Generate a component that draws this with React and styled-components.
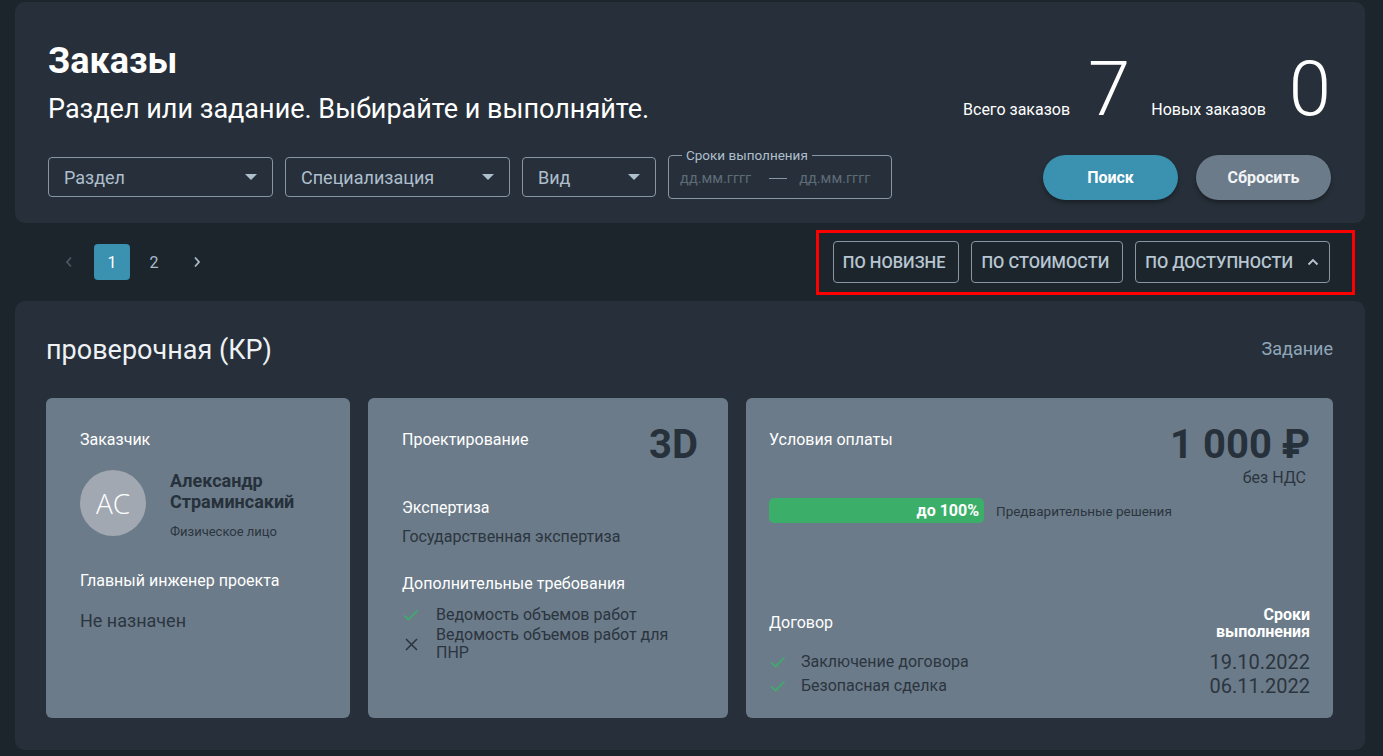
import React from "react";
import styled, { createGlobalStyle } from "styled-components";

const Global = createGlobalStyle`
  html, body { margin: 0; padding: 0; }
  body {
    background: #1d252c;
    font-family: Roboto, "Noto Sans", sans-serif;
    color: #ffffff;
  }
  * { box-sizing: border-box; }
`;

const Page = styled.div`
  padding: 2px 18px 6px 15px;
  display: flex;
  flex-direction: column;
`;

const Panel = styled.section`
  background: #27303a;
  border-radius: 10px;
`;

const Header = styled(Panel)`
  display: flex;
  justify-content: space-between;
  padding: 35px 34px 23px 33px;
  height: 221px;
`;

const HeadLeft = styled.div`
  display: flex;
  flex-direction: column;
`;

const Title = styled.h1`
  margin: 0;
  font-size: 36px;
  line-height: 48px;
  font-weight: 700;
  color: #ffffff;
`;

const Subtitle = styled.p`
  margin: 7px 0 0;
  font-size: 27px;
  line-height: 34px;
  color: #ffffff;
`;

const Filters = styled.div`
  display: flex;
  align-items: flex-end;
  gap: 12px;
  margin-top: 22px;
`;

const Select = styled.div`
  width: ${(p) => p.$w}px;
  height: 40px;
  border: 1px solid #8796a3;
  border-radius: 4px;
  display: flex;
  align-items: center;
  justify-content: space-between;
  padding: 0 15px 0 15px;
  font-size: 18px;
  color: #aebfcd;
  margin-bottom: 2px;
`;

const Caret = styled.span`
  width: 0;
  height: 0;
  border-left: 6px solid transparent;
  border-right: 6px solid transparent;
  border-top: 6px solid #aebfcd;
`;

const DateField = styled.fieldset`
  margin: 0;
  min-width: 0;
  width: 224px;
  height: 51px;
  border: 1px solid #8796a3;
  border-radius: 4px;
  padding: 0 11px 4px;
  display: flex;
  align-items: center;
`;

const Legend = styled.legend`
  font-size: 13.5px;
  color: #aebfcd;
  padding: 0 4px;
  margin-left: 2px;
  line-height: 14px;
`;

const DatePh = styled.span`
  font-size: 14.5px;
  color: #5d6b77;
`;

const DateDash = styled.span`
  width: 18px;
  height: 1px;
  background: #8796a3;
  margin: 0 12px 0 18px;
`;

const HeadRight = styled.div`
  display: flex;
  flex-direction: column;
  align-items: flex-end;
  justify-content: space-between;
  padding-top: 22px;
`;

const Stats = styled.div`
  display: flex;
  align-items: baseline;
`;

const StatLabel = styled.span`
  font-size: 16px;
  color: #ffffff;
  margin-right: ${(p) => p.$mr}px;
`;

const StatValue = styled.span`
  font-size: 76px;
  font-weight: 300;
  line-height: 60px;
  color: #ffffff;
  margin-right: ${(p) => p.$mr || 0}px;
`;

const Buttons = styled.div`
  display: flex;
  gap: 18px;
`;

const PillButton = styled.button`
  width: 135px;
  height: 45px;
  border: none;
  border-radius: 23px;
  background: ${(p) => (p.$primary ? "#3b91b0" : "#6c7b89")};
  font-family: inherit;
  font-size: 16px;
  font-weight: 700;
  box-shadow: 0 3px 4px rgba(0, 0, 0, 0.35);
  cursor: pointer;
  color: ${(p) => (p.$primary ? "#ffffff" : "#f1f4f6")};
`;

const SortRow = styled.div`
  display: flex;
  justify-content: space-between;
  align-items: center;
  height: 78px;
  padding: 0 10px 0 32px;
`;

const Pager = styled.div`
  display: flex;
  align-items: center;
`;

const PageArrow = styled.span`
  width: 44px;
  display: flex;
  justify-content: center;
  color: ${(p) => (p.$disabled ? "#4a5661" : "#a9bccb")};
`;

const PageNum = styled.span`
  width: 36px;
  height: 36px;
  margin: 0 3px;
  border-radius: 4px;
  display: flex;
  align-items: center;
  justify-content: center;
  font-size: 16px;
  background: ${(p) => (p.$active ? "#3b91b0" : "transparent")};
  color: ${(p) => (p.$active ? "#ffffff" : "#a9bccb")};
`;

const SortFrame = styled.div`
  border: 3px solid #ff0000;
  display: flex;
  gap: 12px;
  padding: 8px 22px 9px 14px;
  margin-top: 1px;
`;

const SortButton = styled.button`
  height: 42px;
  padding: 0 13px 0 9px;
  border: 1px solid #8796a3;
  border-radius: 4px;
  background: transparent;
  font-family: inherit;
  font-size: 16.4px;
  font-weight: 500;
  color: #b7c6d2;
  text-transform: uppercase;
  display: flex;
  align-items: center;
  gap: 14px;
  padding-right: ${(p) => (p.$icon ? 10 : 13)}px;
`;

const Orders = styled(Panel)`
  padding: 33px 32px 32px 31px;
  display: flex;
  flex-direction: column;
`;

const OrderHead = styled.div`
  display: flex;
  justify-content: space-between;
  align-items: center;
  margin-bottom: 32px;
`;

const OrderTitle = styled.h2`
  margin: 0;
  font-size: 27px;
  font-weight: 400;
  line-height: 32px;
  color: #eef2f5;
`;

const OrderKind = styled.span`
  font-size: 18px;
  color: #8fa6b9;
  margin-top: -4px;
`;

const Cards = styled.div`
  display: grid;
  grid-template-columns: 304px 360px 1fr;
  gap: 18px;
`;

const Card = styled.div`
  background: #6b7b89;
  border-radius: 6px;
  height: 320px;
  padding: 32px ${(p) => p.$pr || 32}px 20px ${(p) => p.$pl || 34}px;
  display: flex;
  flex-direction: column;
`;

const Label = styled.div`
  font-size: 16px;
  line-height: 20px;
  color: #ffffff;
  margin-top: ${(p) => p.$mt || 0}px;
`;

const DarkText = styled.div`
  font-size: ${(p) => p.$size || 16}px;
  line-height: ${(p) => p.$lh || 20}px;
  color: #2b3540;
  margin-top: ${(p) => p.$mt || 0}px;
`;

const Person = styled.div`
  display: flex;
  align-items: center;
  gap: 24px;
  margin-top: 16px;
`;

const Avatar = styled.div`
  width: 66px;
  height: 66px;
  border-radius: 50%;
  background: #a1a8b1;
  display: flex;
  align-items: center;
  justify-content: center;
  font-size: 28px;
  font-weight: 300;
  color: #ffffff;
  font-family: "Open Sans", Roboto, sans-serif;
  flex: none;
`;

const PersonInfo = styled.div`
  display: flex;
  flex-direction: column;
  padding-top: 4px;
`;

const PersonName = styled.div`
  font-size: 18px;
  line-height: 21px;
  font-weight: 700;
  color: #27313b;
`;

const PersonType = styled.div`
  font-size: 13px;
  color: #2b3540;
  margin-top: 12px;
`;

const RowBetween = styled.div`
  display: flex;
  justify-content: space-between;
  align-items: ${(p) => p.$align || "flex-start"};
  margin-top: ${(p) => p.$mt || 0}px;
`;

const Big = styled.div`
  font-size: 40px;
  line-height: 40px;
  font-weight: 700;
  color: #27313b;
  margin-top: -5px;
`;

const ReqList = styled.ul`
  list-style: none;
  margin: ${(p) => p.$mt ?? 12}px 0 0;
  padding: 0;
  display: flex;
  flex-direction: column;
  gap: ${(p) => p.$gap ?? 2}px;
`;

const ReqItem = styled.li`
  display: flex;
  align-items: center;
  gap: ${(p) => p.$gap || 16}px;
  font-size: 16px;
  line-height: ${(p) => p.$lh || 18}px;
  color: #2b3540;
`;

const IconBox = styled.span`
  width: 18px;
  flex: none;
  display: flex;
  justify-content: center;
`;

const PriceBox = styled.div`
  display: flex;
  flex-direction: column;
  align-items: flex-end;
`;

const PriceNote = styled.div`
  font-size: 16px;
  color: #2b3540;
  margin-top: 3px;
  margin-right: 4px;
`;

const ProgressRow = styled.div`
  display: flex;
  align-items: center;
  gap: 12px;
  margin-top: 11px;
`;

const Bar = styled.div`
  width: 215px;
  height: 25px;
  border-radius: 5px;
  background: #3baf6a;
  display: flex;
  align-items: center;
  justify-content: flex-end;
  padding-right: 5px;
  font-size: 16px;
  font-weight: 700;
  color: #ffffff;
`;

const BarNote = styled.span`
  font-size: 13.5px;
  color: #2b3540;
`;

const Spacer = styled.div`
  flex: 1;
`;

const DeadlineHead = styled.div`
  font-size: 16px;
  line-height: 17px;
  font-weight: 700;
  text-align: right;
  color: #ffffff;
  margin-top: -5px;
`;

const ContractRows = styled.div`
  display: flex;
  justify-content: space-between;
  margin-top: 10px;
`;

const DateCol = styled.div`
  display: flex;
  flex-direction: column;
  align-items: flex-end;
  font-size: 20px;
  line-height: 24px;
  color: #2b3540;
`;

const Check = () => (
  <svg width="16" height="12" viewBox="0 0 16 12">
    <path d="M1.5 6.5 L5.5 10.5 L14.5 1.5" fill="none" stroke="#3baf6a" strokeWidth="1.6" />
  </svg>
);

const Cross = () => (
  <svg width="13" height="13" viewBox="0 0 13 13">
    <path d="M1 1 L12 12 M12 1 L1 12" fill="none" stroke="#2b3540" strokeWidth="1.6" />
  </svg>
);

const ChevronLeft = () => (
  <svg width="8" height="12" viewBox="0 0 8 12">
    <path d="M6 1.5 L2 6 L6 10.5" fill="none" stroke="currentColor" strokeWidth="1.8" />
  </svg>
);

const ChevronRight = () => (
  <svg width="8" height="12" viewBox="0 0 8 12">
    <path d="M2 1.5 L6 6 L2 10.5" fill="none" stroke="currentColor" strokeWidth="1.8" />
  </svg>
);

const ChevronUp = () => (
  <svg width="12" height="8" viewBox="0 0 12 8">
    <path d="M1.5 6.5 L6 2 L10.5 6.5" fill="none" stroke="#b7c6d2" strokeWidth="1.8" />
  </svg>
);

export default function App() {
  return (
    <>
      <Global />
      <Page>
        <Header>
          <HeadLeft>
            <Title>Заказы</Title>
            <Subtitle>Раздел или задание. Выбирайте и выполняйте.</Subtitle>
            <Filters>
              <Select $w={225}>
                Раздел <Caret />
              </Select>
              <Select $w={225}>
                Специализация <Caret />
              </Select>
              <Select $w={134}>
                Вид <Caret />
              </Select>
              <DateField>
                <Legend>Сроки выполнения</Legend>
                <DatePh>дд.мм.гггг</DatePh>
                <DateDash />
                <DatePh>дд.мм.гггг</DatePh>
              </DateField>
            </Filters>
          </HeadLeft>
          <HeadRight>
            <Stats>
              <StatLabel $mr={18}>Всего заказов</StatLabel>
              <StatValue $mr={21}>7</StatValue>
              <StatLabel $mr={23}>Новых заказов</StatLabel>
              <StatValue>0</StatValue>
            </Stats>
            <Buttons>
              <PillButton $primary>Поиск</PillButton>
              <PillButton>Сбросить</PillButton>
            </Buttons>
          </HeadRight>
        </Header>

        <SortRow>
          <Pager>
            <PageArrow $disabled>
              <ChevronLeft />
            </PageArrow>
            <PageNum $active>1</PageNum>
            <PageNum>2</PageNum>
            <PageArrow>
              <ChevronRight />
            </PageArrow>
          </Pager>
          <SortFrame>
            <SortButton>по новизне</SortButton>
            <SortButton>по стоимости</SortButton>
            <SortButton $icon>
              по доступности <ChevronUp />
            </SortButton>
          </SortFrame>
        </SortRow>

        <Orders>
          <OrderHead>
            <OrderTitle>проверочная (КР)</OrderTitle>
            <OrderKind>Задание</OrderKind>
          </OrderHead>
          <Cards>
            <Card>
              <Label>Заказчик</Label>
              <Person>
                <Avatar>AC</Avatar>
                <PersonInfo>
                  <PersonName>
                    Александр
                    <br />
                    Страминсакий
                  </PersonName>
                  <PersonType>Физическое лицо</PersonType>
                </PersonInfo>
              </Person>
              <Label $mt={32}>Главный инженер проекта</Label>
              <DarkText $size={18} $mt={20}>
                Не назначен
              </DarkText>
            </Card>

            <Card $pr={30}>
              <RowBetween>
                <Label>Проектирование</Label>
                <Big>3D</Big>
              </RowBetween>
              <Label $mt={33}>Экспертиза</Label>
              <DarkText $mt={9}>Государственная экспертиза</DarkText>
              <Label $mt={27}>Дополнительные требования</Label>
              <ReqList $mt={12}>
                <ReqItem>
                  <IconBox>
                    <Check />
                  </IconBox>
                  Ведомость объемов работ
                </ReqItem>
                <ReqItem>
                  <IconBox>
                    <Cross />
                  </IconBox>
                  Ведомость объемов работ для ПНР
                </ReqItem>
              </ReqList>
            </Card>

            <Card $pl={23} $pr={23}>
              <RowBetween>
                <Label>Условия оплаты</Label>
                <PriceBox>
                  <Big>1 000 ₽</Big>
                  <PriceNote>без НДС</PriceNote>
                </PriceBox>
              </RowBetween>
              <ProgressRow>
                <Bar>до 100%</Bar>
                <BarNote>Предварительные решения</BarNote>
              </ProgressRow>
              <Spacer />
              <RowBetween $align="center">
                <Label $mt={-6}>Договор</Label>
                <DeadlineHead>
                  Сроки
                  <br />
                  выполнения
                </DeadlineHead>
              </RowBetween>
              <ContractRows>
                <ReqList $mt={0} $gap={0}>
                  <ReqItem $lh={24} $gap={14}>
                    <IconBox>
                      <Check />
                    </IconBox>
                    Заключение договора
                  </ReqItem>
                  <ReqItem $lh={24} $gap={14}>
                    <IconBox>
                      <Check />
                    </IconBox>
                    Безопасная сделка
                  </ReqItem>
                </ReqList>
                <DateCol>
                  <span>19.10.2022</span>
                  <span>06.11.2022</span>
                </DateCol>
              </ContractRows>
            </Card>
          </Cards>
        </Orders>
      </Page>
    </>
  );
}
